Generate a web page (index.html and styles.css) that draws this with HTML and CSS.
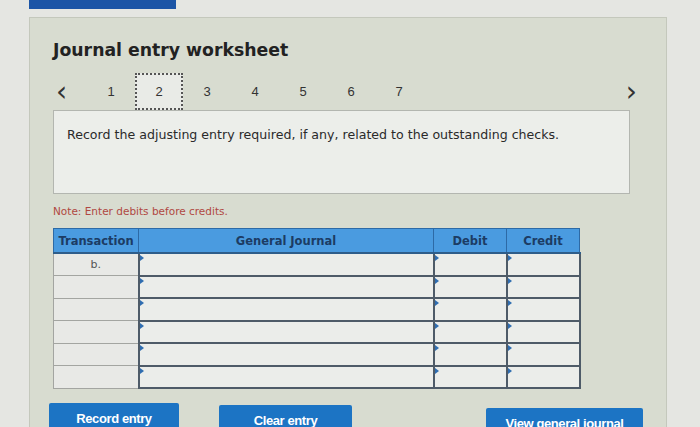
FILE: index.html
```html
<!DOCTYPE html>
<html>
<head>
<meta charset="utf-8">
<link rel="stylesheet" href="styles.css">
</head>
<body>
<div class="topbar"></div>
<div class="panel">
  <h1 class="title">Journal entry worksheet</h1>
  <div class="nav">
    <span class="arrow prev">&lsaquo;</span>
    <div class="steps">
      <span class="step">1</span>
      <span class="step active">2</span>
      <span class="step">3</span>
      <span class="step">4</span>
      <span class="step">5</span>
      <span class="step">6</span>
      <span class="step">7</span>
    </div>
    <span class="arrow next">&rsaquo;</span>
  </div>
  <div class="prompt">Record the adjusting entry required, if any, related to the outstanding checks.</div>
  <p class="note">Note: Enter debits before credits.</p>
  <table class="journal">
    <thead>
      <tr>
        <th class="c-tr">Transaction</th>
        <th class="c-gj">General Journal</th>
        <th class="c-dr">Debit</th>
        <th class="c-cr">Credit</th>
      </tr>
    </thead>
    <tbody>
      <tr><td class="tr">b.</td><td class="in"></td><td class="in"></td><td class="in"></td></tr>
      <tr><td class="tr"></td><td class="in"></td><td class="in"></td><td class="in"></td></tr>
      <tr><td class="tr"></td><td class="in"></td><td class="in"></td><td class="in"></td></tr>
      <tr><td class="tr"></td><td class="in"></td><td class="in"></td><td class="in"></td></tr>
      <tr><td class="tr"></td><td class="in"></td><td class="in"></td><td class="in"></td></tr>
      <tr><td class="tr"></td><td class="in"></td><td class="in"></td><td class="in"></td></tr>
    </tbody>
  </table>
  <div class="buttons">
    <button class="btn b-record">Record entry</button>
    <button class="btn b-clear">Clear entry</button>
    <button class="btn b-view">View general journal</button>
  </div>
</div>
</body>
</html>
```

FILE: styles.css
```css
html, body {
  margin: 0;
  padding: 0;
}
body {
  background: #e5e6e2;
  width: 700px;
  height: 427px;
  overflow: hidden;
  font-family: "DejaVu Sans", Verdana, sans-serif;
}
.topbar {
  margin-left: 29px;
  width: 147px;
  height: 9px;
  background: #1c55a6;
}
.panel {
  margin-left: 29px;
  margin-top: 8px;
  width: 638px;
  height: 420px;
  background: #d8dcd0;
  border: 1px solid #c4c8bc;
  box-sizing: border-box;
  padding: 21px 0 0 23px;
}
.title {
  margin: 0;
  font-size: 17.3px;
  font-weight: bold;
  color: #222;
  line-height: 22px;
}
.nav {
  display: flex;
  align-items: center;
  height: 37px;
  margin-top: 12px;
  width: 584px;
}
.arrow {
  font-size: 28px;
  color: #333;
  line-height: 37px;
}
.prev {
  width: 34px;
  padding-left: 3px;
  box-sizing: border-box;
}
.next {
  margin-left: auto;
}
.steps {
  display: flex;
}
.step {
  width: 48px;
  height: 37px;
  display: flex;
  align-items: center;
  justify-content: center;
  font-family: "Liberation Sans", Arial, sans-serif;
  font-size: 13px;
  color: #333;
  box-sizing: border-box;
}
.active {
  border: 2px dotted #555;
  background: #e9ebe7;
}
.prompt {
  width: 577px;
  height: 84px;
  box-sizing: border-box;
  background: #eceeea;
  border: 1px solid #b3b6b0;
  padding: 16px 13px;
  font-size: 12.6px;
  color: #2a2a2a;
}
.note {
  margin: 11px 0 0;
  font-size: 10.5px;
  color: #b04842;
  line-height: 12px;
}
.journal {
  margin-top: 11px;
  border-collapse: collapse;
  width: 522px;
  table-layout: fixed;
}
.journal th {
  background: #4a9be0;
  color: #1c3c64;
  font-size: 11.5px;
  font-weight: bold;
  height: 23px;
  padding: 0;
  border: 1px solid #2d6aa6;
  border-bottom: 2px solid #2e5d8a;
}
.c-tr { width: 84px; }
.c-gj { width: 294px; }
.c-dr { width: 72px; }
.c-cr { width: 72px; }
.journal td {
  height: 20.5px;
  padding: 0;
  font-size: 11px;
  color: #555;
}
.journal .tr {
  background: #e8e9e6;
  border: 1px solid #a3a5a1;
  text-align: center;
}
.journal .in {
  background: #ebedea;
  border: 2px solid #4e5b68;
  position: relative;
}
.journal .in::before {
  content: "";
  position: absolute;
  left: 0;
  top: 1px;
  border-top: 3px solid transparent;
  border-bottom: 3px solid transparent;
  border-left: 4px solid #2f6db0;
}
.buttons {
  display: flex;
  margin-top: 14px;
  margin-left: -4px;
}
.btn {
  height: 26px;
  border: none;
  background: #1c74c4;
  color: #fff;
  font-family: "Liberation Sans", Arial, sans-serif;
  font-weight: bold;
  font-size: 13px;
  letter-spacing: -0.4px;
  padding: 4px 0 0;
  border-radius: 2px 2px 0 0;
}
.b-record { width: 130px; }
.b-clear { width: 133px; margin-left: 40px; margin-top: 2px; }
.b-view { width: 157px; margin-left: 134px; margin-top: 5px; }
```
